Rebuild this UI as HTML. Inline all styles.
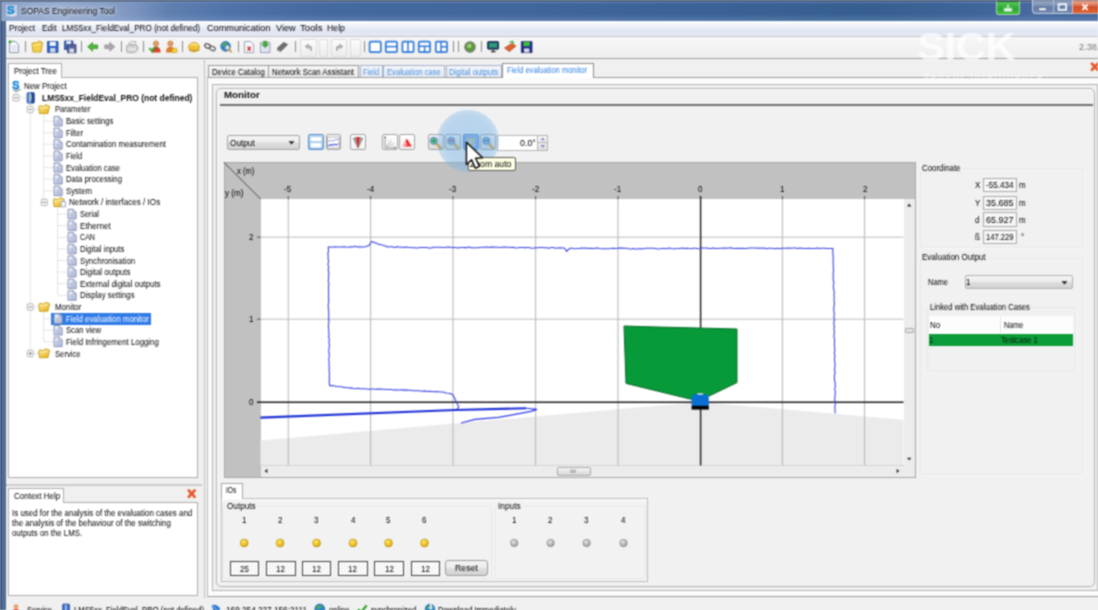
<!DOCTYPE html>
<html><head><meta charset="utf-8"><title>SOPAS Engineering Tool</title>
<style>
html,body{margin:0;padding:0;}
html{overflow:hidden;}
body{width:1098px;height:610px;overflow:hidden;position:relative;background:#f0f0f0;}
#stage{position:absolute;left:-20px;top:-20px;width:1138px;height:650px;padding:0;filter:url(#softblur);background:#f0f0f0;}
#inner{position:absolute;left:20px;top:20px;width:1098px;height:610px;overflow:visible;}
body,#stage{font-family:"Liberation Sans",sans-serif;font-size:9.5px;color:#000;}
.a{position:absolute;box-sizing:border-box;}
.t{position:absolute;white-space:nowrap;line-height:12px;height:12px;transform-origin:0 50%;}
#titlebar{left:0;top:0;width:1098px;height:21px;background:linear-gradient(90deg,#8da2c8 0,#9aadd0 60px,#8099c3 125px,#5f7fb0 170px,#4f72a8 230px,#44699f 330px,#40669b 520px,#3b6296 700px,#365f90 870px,#3d6497 960px,#46699e 1030px,#42669b 1098px);}
#titleshade{left:0;top:0;width:1098px;height:21px;background:linear-gradient(180deg,#2a3a52 0,#2e4059 1px,rgba(150,175,215,.55) 1.7px,rgba(120,150,200,.2) 2.8px,rgba(0,0,0,0) 4px,rgba(0,0,0,0) 14px,rgba(170,195,230,.22) 21px);}
#lborder{left:0;top:21px;width:6.4px;height:589px;background:linear-gradient(90deg,#2a344e 0,#2c3650 1px,#47679a 1.5px,#53739f 5px,#566479 5.6px,#5a677c 6.4px);}
#menubar{left:6px;top:20.8px;width:1092px;height:15.7px;background:linear-gradient(180deg,#fbfcfe 0,#f5f7fc 3px,#e6eaf6 8px,#e0e5f3 11px,#e5e9f4 100%);}
#toolbar{left:6px;top:36px;width:1092px;height:22.8px;background:linear-gradient(180deg,#f6f6f6,#efefef);border-top:1.4px solid #c6c6cc;border-bottom:1px solid #9d9d9d;}
.tab{background:linear-gradient(180deg,#f6f6f6,#e9e9e9);border:1px solid #9a9a9a;border-bottom:none;}
.tabsel{background:#fff;border:1px solid #8e8e8e;border-bottom:none;}
.box{background:#fff;border:1px solid #adadad;}
.grp{border:1px solid #d5d5d5;border-radius:3px;}
.fld{background:#fff;border:1px solid #8a8a8a;}
.btn{border:1px solid #8f8f8f;border-radius:2px;background:linear-gradient(180deg,#f4f4f4 0,#ececec 48%,#dedede 52%,#d2d2d2 100%);}
.sep{width:1px;height:11px;top:41px;background:#8a8a8a;}
</style></head>
<body>
<svg width="0" height="0" style="position:absolute"><defs><filter id="softblur" x="0" y="0" width="100%" height="100%" color-interpolation-filters="sRGB"><feConvolveMatrix order="3" kernelMatrix="1 2 1 2 5 2 1 2 1" divisor="17" edgeMode="duplicate" preserveAlpha="true"/></filter></defs></svg><div id="stage"><div id="inner">
<div class="a" id="titlebar"></div>
<div class="a" id="titleshade"></div>
<div class="a" id="lborder"></div>
<div class="a" id="menubar"></div>
<div class="a" id="toolbar"></div>
<div class="a sep" style="left:25px"></div>
<div class="a sep" style="left:81.4px"></div>
<div class="a sep" style="left:120.8px"></div>
<div class="a sep" style="left:143.4px"></div>
<div class="a sep" style="left:182px"></div>
<div class="a sep" style="left:238px"></div>
<div class="a sep" style="left:294.5px"></div>
<div class="a sep" style="left:363.8px"></div>
<div class="a sep" style="left:453.4px"></div>
<div class="a sep" style="left:458px"></div>
<div class="a sep" style="left:481.3px"></div>
<div class="a" style="left:299.6px;top:38.5px;width:17.7px;height:18px;border:1px solid #dcdcdc;border-radius:2px;background:linear-gradient(180deg,#fcfcfc,#ececec)"></div>
<div class="a" style="left:318.7px;top:38.5px;width:9.6px;height:18px;border:1px solid #dcdcdc;border-radius:2px;background:linear-gradient(180deg,#fcfcfc,#ececec)"></div>
<div class="a" style="left:331px;top:38.5px;width:16.4px;height:18px;border:1px solid #dcdcdc;border-radius:2px;background:linear-gradient(180deg,#fcfcfc,#ececec)"></div>
<div class="a" style="left:350px;top:38.5px;width:10.5px;height:18px;border:1px solid #dcdcdc;border-radius:2px;background:linear-gradient(180deg,#fcfcfc,#ececec)"></div>
<svg class="a" style="left:0;top:36px" width="560" height="22" viewBox="0 36 560 22">
<path d="M9.5 41.5H15.5L18.5 44.5V52.5H9.5Z" fill="#f6f8fc" stroke="#7f8aa8" stroke-width="0.9"/><path d="M11 46h6M11 48h6M11 50h6" stroke="#c4cbdc" stroke-width="0.7"/><circle cx="10" cy="41.8" r="1.6" fill="#3fae3a"/>
<path d="M32 44L33 52H41L42.5 42.5L38.5 41L36.8 43L33 42.5Z" fill="#f4cf4c" stroke="#c79c20" stroke-width="0.9" stroke-linejoin="round"/><path d="M33.5 45.4L41 44.2" stroke="#fff2a8" stroke-width="0.9"/>
<path d="M47.5 41.5H58V52.5H47.5Z" fill="#2d62c4" stroke="#1f469a" stroke-width="0.8"/><rect x="49.6" y="41.8" width="6.2" height="4.2" fill="#eef2fa"/><rect x="50.2" y="48" width="5.2" height="4.4" fill="#cfd6e6"/>
<path d="M64.5 41H73V49.5H64.5Z" fill="#3c64b8" stroke="#28468f" stroke-width="0.8"/><rect x="66.4" y="41.2" width="4.6" height="3.2" fill="#eef2fa"/><path d="M67.5 44.5H76V52.8H67.5Z" fill="#55629c" stroke="#3a4578" stroke-width="0.8"/><rect x="69.4" y="48.6" width="4.6" height="4" fill="#d9dce8"/>
<path d="M87.6 46.8L92.6 42.4V45H97.6V48.6H92.6V51.2Z" fill="#4eb83a" stroke="#2f8a22" stroke-width="0.7"/>
<path d="M114.8 46.8L109.8 42.4V45H104.8V48.6H109.8V51.2Z" fill="#a9a9a9" stroke="#8a8a8a" stroke-width="0.7"/>
<path d="M128.5 43.5L131 41.5H136L134.6 45.4Z" fill="#f2f2f2" stroke="#a0a0a0" stroke-width="0.7"/><path d="M126.6 46.5Q126.6 45 128.6 45H135.6Q137.6 45 137.6 46.8V50L134.6 52.6H128.6Q126.6 52.6 126.6 51Z" fill="#d4d4d4" stroke="#9a9a9a" stroke-width="0.8"/><path d="M128 49.2H136" stroke="#f5f5f5" stroke-width="1"/>
<circle cx="156" cy="43.6" r="2.6" fill="#e2a06a" stroke="#b06a30" stroke-width="0.6"/><path d="M151.6 52.6Q151.6 46.4 156 46.4Q160.6 46.4 160.6 52.6Z" fill="#d8432c"/><path d="M149.4 48.2L152.2 51.4L155.6 46.8" stroke="#2fa02a" stroke-width="1.8" fill="none"/>
<circle cx="170.4" cy="43.6" r="2.6" fill="#e2a06a" stroke="#b06a30" stroke-width="0.6"/><path d="M166 52.6Q166 46.4 170.4 46.4Q175 46.4 175 52.6Z" fill="#e07a2c"/><rect x="172" y="48.4" width="5" height="4.2" rx="0.8" fill="#f2d23a" stroke="#b9971c" stroke-width="0.6"/>
<ellipse cx="194" cy="47.2" rx="5.4" ry="4.6" fill="#f1c232" stroke="#c4952a" stroke-width="0.8"/><path d="M190.4 45.2Q194 43 197.6 45.4" stroke="#fff0b0" stroke-width="1.2" fill="none"/><path d="M189 50.4H199.4" stroke="#c4952a" stroke-width="1.2"/>
<ellipse cx="207.6" cy="46" rx="3" ry="2" fill="none" stroke="#555" stroke-width="1.3" transform="rotate(25 207.6 46)"/><ellipse cx="212.4" cy="48.4" rx="3" ry="2" fill="none" stroke="#666" stroke-width="1.3" transform="rotate(25 212.4 48.4)"/>
<circle cx="225.6" cy="46.4" r="4.8" fill="#2f86c8" stroke="#1f5f96" stroke-width="0.7"/><path d="M222 44.4Q224.4 41.8 227.6 43.2Q226 45.6 223.6 46.4Z" fill="#4fb04a"/><circle cx="227.4" cy="47.6" r="2.3" fill="#d9ecf8" stroke="#7a7a7a" stroke-width="0.7"/><path d="M229 49.4L231.6 52.2" stroke="#c98a2a" stroke-width="1.6"/>
<path d="M244.5 41.5H250.6L253.6 44.4V52.6H244.5Z" fill="#f7f8fc" stroke="#8a92ae" stroke-width="0.8"/><path d="M247.6 46.6L250.6 50.6M250.6 46.6L247.6 50.6" stroke="#d9281c" stroke-width="1.4"/>
<path d="M260.4 42.4H270V52.6H260.4Z" fill="#dfe4ee" stroke="#8a92ae" stroke-width="0.8"/><path d="M263.4 41.2H267V44.6H268.6L265.2 47.6L261.8 44.6H263.4Z" fill="#3fae3a" stroke="#2a8226" stroke-width="0.5"/>
<path d="M277 48.6L283.6 42.6L287.6 44.6L281 51Z" fill="#6f6f6f" stroke="#4a4a4a" stroke-width="0.7"/><path d="M277 48.6L281 51L280.6 52.6L276.8 50.2Z" fill="#9a9a9a"/>
<path d="M311.6 51Q313.4 45.4 308.4 45.2V43.2L304.8 46.4L308.4 49.4V47.6Q310.6 47.6 310 51Z" fill="#a9a9a9"/>
<path d="M336.4 51Q334.6 45.4 339.6 45.2V43.2L343.2 46.4L339.6 49.4V47.6Q337.4 47.6 338 51Z" fill="#a9a9a9"/>
<rect x="369.6" y="41.6" width="11.2" height="10.6" rx="1.2" fill="#fff" stroke="#2f7ad8" stroke-width="1.7"/><path d="" stroke="#2f7ad8" stroke-width="1.5" fill="none"/>
<rect x="385.8" y="41.6" width="11.2" height="10.6" rx="1.2" fill="#fff" stroke="#2f7ad8" stroke-width="1.7"/><path d="M385.8 46.6H397" stroke="#2f7ad8" stroke-width="1.5" fill="none"/>
<rect x="402.4" y="41.6" width="11.2" height="10.6" rx="1.2" fill="#fff" stroke="#2f7ad8" stroke-width="1.7"/><path d="M408 41.6V52.2" stroke="#2f7ad8" stroke-width="1.5" fill="none"/>
<rect x="418.8" y="41.6" width="11.2" height="10.6" rx="1.2" fill="#fff" stroke="#2f7ad8" stroke-width="1.7"/><path d="M418.8 46.2H430M424.6 46.2V52.2" stroke="#2f7ad8" stroke-width="1.5" fill="none"/>
<rect x="435.8" y="41.6" width="11.2" height="10.6" rx="1.2" fill="#fff" stroke="#2f7ad8" stroke-width="1.7"/><path d="M441 41.6V52.2M441 46.8H447" stroke="#2f7ad8" stroke-width="1.5" fill="none"/>
<circle cx="470" cy="47" r="5.2" fill="#5a9a3a" stroke="#7a7a7a" stroke-width="1.2"/><circle cx="469.4" cy="46" r="2.2" fill="#9fd07a"/>
<rect x="487.6" y="41.6" width="11" height="7.6" rx="0.8" fill="#1f3f6a" stroke="#10223f" stroke-width="0.8"/><rect x="489" y="43" width="8.2" height="4.6" fill="#2f9a7a"/><path d="M491 51.6H495.6M493.2 49.4V51.6" stroke="#333" stroke-width="1.3"/>
<path d="M504.6 48L511.6 43.6L516 46L509.4 51.6Z" fill="#e0622c" stroke="#a8431c" stroke-width="0.7"/><path d="M509.6 42.4L512.6 41.4L513.6 44" stroke="#3fae3a" stroke-width="1.4" fill="none"/>
<path d="M521.4 41.6H532V52.6H521.4Z" fill="#1e2a8c" stroke="#141c5f" stroke-width="0.7"/><rect x="523.4" y="41.8" width="6.4" height="4.4" fill="#3fbf3a"/><rect x="524" y="48.4" width="5.4" height="4" fill="#d9dce8"/>
</svg>
<div class="a" style="left:996px;top:1px;width:23.5px;height:13.5px;border:1px solid #a9d7b0;border-top:none;border-radius:0 0 3px 3px;background:linear-gradient(180deg,#2c4a3a 0,#4fc254 1.5px,#34b03a 50%,#2aa632 55%,#3fbd42)"></div>
<svg class="a" style="left:1003px;top:3px" width="10" height="10"><rect x="1" y="5" width="8" height="3.6" fill="#e6f4e4" stroke="#8cc78c" stroke-width="0.6"/><path d="M5 1.4V5" stroke="#e6f4e4" stroke-width="1.4"/></svg>
<div class="a" style="left:1031.5px;top:0;width:67px;height:14px;border:1px solid #c3cee0;border-top:none;border-radius:0 0 4px 4px;background:linear-gradient(180deg,#2e3f5a 0,#93a6c6 1.5px,#7a90b4 45%,#647da6 52%,#7189b2)"></div>
<div class="a" style="left:1052.5px;top:0;width:1px;height:13.5px;background:#aebbd2"></div>
<div class="a" style="left:1072px;top:0;width:26px;height:13.5px;border-left:1px solid #e0c0b8;border-bottom:1px solid #d8b0a8;background:linear-gradient(180deg,#4a3238 0,#e8a590 1.5px,#dd6c4a 45%,#d24c26 52%,#dc6636)"></div>
<svg class="a" style="left:1032px;top:0" width="66" height="14"><rect x="7" y="8" width="7" height="2.4" fill="#fff" stroke="#5a6a88" stroke-width="0.4"/><rect x="26.6" y="4.2" width="7.6" height="5.6" fill="none" stroke="#fff" stroke-width="1.6"/><path d="M50.4 4.4L55.6 9.8M55.6 4.4L50.4 9.8" stroke="#fff" stroke-width="1.8"/></svg>
<svg class="a" style="left:1090px;top:62px" width="8" height="10"><path d="M2 1.8L7.8 7.8M7.8 1.8L2 7.8" stroke="#e5592b" stroke-width="2.7" stroke-linecap="round"/></svg>
<div class="a" style="left:0;top:0;width:1.3px;height:21px;background:#232f4a"></div>
<svg class="a" style="left:5px;top:3px" width="14" height="15" viewBox="5 3 14 15"><rect x="6" y="5" width="11" height="11.4" fill="rgba(235,240,250,.55)"/><path d="M8 15.6L12.6 16.6L17 13.8L13 12.6Z" fill="#e4e8ee"/><text x="7" y="14.4" font-family="Liberation Sans,sans-serif" font-weight="bold" font-size="11.5" fill="#1d8ad6" stroke="#1d8ad6" stroke-width="0.5">S</text></svg>
<div class="a tabsel" style="left:8px;top:63px;width:54px;height:15px;border-color:#adadad"></div>
<div class="a box" style="left:8px;top:77px;width:190px;height:401px;"></div>
<div class="a" style="left:9px;top:77px;width:52px;height:1px;background:#fff"></div>
<div class="a" style="left:6px;top:483.8px;width:196px;height:1.8px;background:#cbcbcb"></div>
<div class="a" style="left:204px;top:58px;width:1.2px;height:540px;background:#c2c2c2"></div>
<div class="a tabsel" style="left:8px;top:488px;width:56px;height:15px;border-color:#adadad"></div>
<div class="a box" style="left:8px;top:502px;width:190px;height:94px;"></div>
<div class="a" style="left:9px;top:502px;width:54px;height:1px;background:#fff"></div>
<div class="a" style="left:51px;top:313px;width:100px;height:12px;background:#2f7be8"></div>
<svg class="a" style="left:0;top:0" width="210" height="610" viewBox="0 0 210 610">
<defs><linearGradient id="gdoc" x1="0" y1="0" x2="1" y2="1"><stop offset="0" stop-color="#f4f6fb"/><stop offset="1" stop-color="#b9c4e0"/></linearGradient>
<linearGradient id="gfol" x1="0" y1="0" x2="0.6" y2="1"><stop offset="0" stop-color="#fff0a0"/><stop offset="1" stop-color="#e9b92a"/></linearGradient>
<linearGradient id="gdev" x1="0" y1="0" x2="1" y2="0"><stop offset="0" stop-color="#3f6fc8"/><stop offset="0.45" stop-color="#8fb6ee"/><stop offset="0.6" stop-color="#2a50a8"/><stop offset="1" stop-color="#1c3a88"/></linearGradient></defs>
<path d="M16 92V97.8M19 97.8H26" stroke="#c6c6c6" stroke-width="0.9" stroke-dasharray="1 1" fill="none"/>
<path d="M30.3 104V353.5M33 109.4H38M33 307.0H38M33 353.5H38" stroke="#c6c6c6" stroke-width="0.9" stroke-dasharray="1 1" fill="none"/>
<path d="M43.6 114.4V202.4" stroke="#c6c6c6" stroke-width="0.9" stroke-dasharray="1 1" fill="none"/>
<path d="M44 121.1H53" stroke="#c6c6c6" stroke-width="0.9" stroke-dasharray="1 1" fill="none"/>
<path d="M44 132.7H53" stroke="#c6c6c6" stroke-width="0.9" stroke-dasharray="1 1" fill="none"/>
<path d="M44 144.3H53" stroke="#c6c6c6" stroke-width="0.9" stroke-dasharray="1 1" fill="none"/>
<path d="M44 155.9H53" stroke="#c6c6c6" stroke-width="0.9" stroke-dasharray="1 1" fill="none"/>
<path d="M44 167.5H53" stroke="#c6c6c6" stroke-width="0.9" stroke-dasharray="1 1" fill="none"/>
<path d="M44 179.2H53" stroke="#c6c6c6" stroke-width="0.9" stroke-dasharray="1 1" fill="none"/>
<path d="M44 190.8H53" stroke="#c6c6c6" stroke-width="0.9" stroke-dasharray="1 1" fill="none"/>
<path d="M57.5 207.4V295.4" stroke="#c6c6c6" stroke-width="0.9" stroke-dasharray="1 1" fill="none"/>
<path d="M58 214.0H67" stroke="#c6c6c6" stroke-width="0.9" stroke-dasharray="1 1" fill="none"/>
<path d="M58 225.6H67" stroke="#c6c6c6" stroke-width="0.9" stroke-dasharray="1 1" fill="none"/>
<path d="M58 237.3H67" stroke="#c6c6c6" stroke-width="0.9" stroke-dasharray="1 1" fill="none"/>
<path d="M58 248.9H67" stroke="#c6c6c6" stroke-width="0.9" stroke-dasharray="1 1" fill="none"/>
<path d="M58 260.5H67" stroke="#c6c6c6" stroke-width="0.9" stroke-dasharray="1 1" fill="none"/>
<path d="M58 272.1H67" stroke="#c6c6c6" stroke-width="0.9" stroke-dasharray="1 1" fill="none"/>
<path d="M58 283.7H67" stroke="#c6c6c6" stroke-width="0.9" stroke-dasharray="1 1" fill="none"/>
<path d="M58 295.4H67" stroke="#c6c6c6" stroke-width="0.9" stroke-dasharray="1 1" fill="none"/>
<path d="M43.6 312.0V341.8" stroke="#c6c6c6" stroke-width="0.9" stroke-dasharray="1 1" fill="none"/>
<path d="M44 318.6H53" stroke="#c6c6c6" stroke-width="0.9" stroke-dasharray="1 1" fill="none"/>
<path d="M44 330.2H53" stroke="#c6c6c6" stroke-width="0.9" stroke-dasharray="1 1" fill="none"/>
<path d="M44 341.8H53" stroke="#c6c6c6" stroke-width="0.9" stroke-dasharray="1 1" fill="none"/>
<path d="M12 90.2L16.5 92.6L22 89.4L17 88Z" fill="#b4bac6"/>
<text x="12.2" y="89.4" font-family="Liberation Sans,sans-serif" font-weight="bold" font-size="10.8" fill="#1d8ad6" stroke="#1d8ad6" stroke-width="0.6">S</text>
<rect x="27" y="92.6" width="7.4" height="10.6" rx="1.2" fill="url(#gdev)" stroke="#1c3a88" stroke-width="0.6"/><rect x="30" y="94.4" width="1.3" height="6" fill="#c8f2a0"/>
<g><rect x="13.0" y="94.6" width="6" height="6.4" rx="1" fill="#fbfbfb" stroke="#a9a9a9" stroke-width="0.9"/><path d="M14.4 97.8H17.6" stroke="#777" stroke-width="0.9"/></g>
<g><rect x="27.2" y="106.2" width="6" height="6.4" rx="1" fill="#fbfbfb" stroke="#a9a9a9" stroke-width="0.9"/><path d="M28.6 109.4H31.8" stroke="#777" stroke-width="0.9"/></g>
<g transform="translate(38.2,104.0)"><path d="M0.6 3.2L1.2 9.6H9.6L11.4 2.2L7.2 0.6L5.6 2.4L1.2 1.8Z" fill="url(#gfol)" stroke="#c49a1c" stroke-width="0.9" stroke-linejoin="round"/><path d="M2.2 4.2L9.8 3.2" stroke="#fff3b0" stroke-width="0.9"/></g>
<g transform="translate(53.6,115.9)"><path d="M0.5 0.5H5.6L8.5 3.2V10H0.5Z" fill="url(#gdoc)" stroke="#7a86ad" stroke-width="0.9"/><path d="M5.6 0.5V3.2H8.5" fill="#eef1f8" stroke="#7a86ad" stroke-width="0.7"/><path d="M2.2 5H6.8M2.2 6.6H6.8M2.2 8.2H6.8" stroke="#9aa6c8" stroke-width="0.7"/></g>
<g transform="translate(53.6,127.5)"><path d="M0.5 0.5H5.6L8.5 3.2V10H0.5Z" fill="url(#gdoc)" stroke="#7a86ad" stroke-width="0.9"/><path d="M5.6 0.5V3.2H8.5" fill="#eef1f8" stroke="#7a86ad" stroke-width="0.7"/><path d="M2.2 5H6.8M2.2 6.6H6.8M2.2 8.2H6.8" stroke="#9aa6c8" stroke-width="0.7"/></g>
<g transform="translate(53.6,139.1)"><path d="M0.5 0.5H5.6L8.5 3.2V10H0.5Z" fill="url(#gdoc)" stroke="#7a86ad" stroke-width="0.9"/><path d="M5.6 0.5V3.2H8.5" fill="#eef1f8" stroke="#7a86ad" stroke-width="0.7"/><path d="M2.2 5H6.8M2.2 6.6H6.8M2.2 8.2H6.8" stroke="#9aa6c8" stroke-width="0.7"/></g>
<g transform="translate(53.6,150.7)"><path d="M0.5 0.5H5.6L8.5 3.2V10H0.5Z" fill="url(#gdoc)" stroke="#7a86ad" stroke-width="0.9"/><path d="M5.6 0.5V3.2H8.5" fill="#eef1f8" stroke="#7a86ad" stroke-width="0.7"/><path d="M2.2 5H6.8M2.2 6.6H6.8M2.2 8.2H6.8" stroke="#9aa6c8" stroke-width="0.7"/></g>
<g transform="translate(53.6,162.3)"><path d="M0.5 0.5H5.6L8.5 3.2V10H0.5Z" fill="url(#gdoc)" stroke="#7a86ad" stroke-width="0.9"/><path d="M5.6 0.5V3.2H8.5" fill="#eef1f8" stroke="#7a86ad" stroke-width="0.7"/><path d="M2.2 5H6.8M2.2 6.6H6.8M2.2 8.2H6.8" stroke="#9aa6c8" stroke-width="0.7"/></g>
<g transform="translate(53.6,174.0)"><path d="M0.5 0.5H5.6L8.5 3.2V10H0.5Z" fill="url(#gdoc)" stroke="#7a86ad" stroke-width="0.9"/><path d="M5.6 0.5V3.2H8.5" fill="#eef1f8" stroke="#7a86ad" stroke-width="0.7"/><path d="M2.2 5H6.8M2.2 6.6H6.8M2.2 8.2H6.8" stroke="#9aa6c8" stroke-width="0.7"/></g>
<g transform="translate(53.6,185.6)"><path d="M0.5 0.5H5.6L8.5 3.2V10H0.5Z" fill="url(#gdoc)" stroke="#7a86ad" stroke-width="0.9"/><path d="M5.6 0.5V3.2H8.5" fill="#eef1f8" stroke="#7a86ad" stroke-width="0.7"/><path d="M2.2 5H6.8M2.2 6.6H6.8M2.2 8.2H6.8" stroke="#9aa6c8" stroke-width="0.7"/></g>
<g><rect x="41.3" y="199.2" width="6" height="6.4" rx="1" fill="#fbfbfb" stroke="#a9a9a9" stroke-width="0.9"/><path d="M42.7 202.4H45.9" stroke="#777" stroke-width="0.9"/></g>
<g transform="translate(52.8,197.0)"><path d="M0.6 3.2L1.2 9.6H9.6L11.4 2.2L7.2 0.6L5.6 2.4L1.2 1.8Z" fill="url(#gfol)" stroke="#c49a1c" stroke-width="0.9" stroke-linejoin="round"/><path d="M2.2 4.2L9.8 3.2" stroke="#fff3b0" stroke-width="0.9"/></g>
<path d="M61 201.4h4.5v5.5h-4.5z" fill="#f4f6fb" stroke="#8a96bd" stroke-width="0.7"/>
<g transform="translate(67.6,208.8)"><path d="M0.5 0.5H5.6L8.5 3.2V10H0.5Z" fill="url(#gdoc)" stroke="#7a86ad" stroke-width="0.9"/><path d="M5.6 0.5V3.2H8.5" fill="#eef1f8" stroke="#7a86ad" stroke-width="0.7"/><path d="M2.2 5H6.8M2.2 6.6H6.8M2.2 8.2H6.8" stroke="#9aa6c8" stroke-width="0.7"/></g>
<g transform="translate(67.6,220.4)"><path d="M0.5 0.5H5.6L8.5 3.2V10H0.5Z" fill="url(#gdoc)" stroke="#7a86ad" stroke-width="0.9"/><path d="M5.6 0.5V3.2H8.5" fill="#eef1f8" stroke="#7a86ad" stroke-width="0.7"/><path d="M2.2 5H6.8M2.2 6.6H6.8M2.2 8.2H6.8" stroke="#9aa6c8" stroke-width="0.7"/></g>
<g transform="translate(67.6,232.1)"><path d="M0.5 0.5H5.6L8.5 3.2V10H0.5Z" fill="url(#gdoc)" stroke="#7a86ad" stroke-width="0.9"/><path d="M5.6 0.5V3.2H8.5" fill="#eef1f8" stroke="#7a86ad" stroke-width="0.7"/><path d="M2.2 5H6.8M2.2 6.6H6.8M2.2 8.2H6.8" stroke="#9aa6c8" stroke-width="0.7"/></g>
<g transform="translate(67.6,243.7)"><path d="M0.5 0.5H5.6L8.5 3.2V10H0.5Z" fill="url(#gdoc)" stroke="#7a86ad" stroke-width="0.9"/><path d="M5.6 0.5V3.2H8.5" fill="#eef1f8" stroke="#7a86ad" stroke-width="0.7"/><path d="M2.2 5H6.8M2.2 6.6H6.8M2.2 8.2H6.8" stroke="#9aa6c8" stroke-width="0.7"/></g>
<g transform="translate(67.6,255.3)"><path d="M0.5 0.5H5.6L8.5 3.2V10H0.5Z" fill="url(#gdoc)" stroke="#7a86ad" stroke-width="0.9"/><path d="M5.6 0.5V3.2H8.5" fill="#eef1f8" stroke="#7a86ad" stroke-width="0.7"/><path d="M2.2 5H6.8M2.2 6.6H6.8M2.2 8.2H6.8" stroke="#9aa6c8" stroke-width="0.7"/></g>
<g transform="translate(67.6,266.9)"><path d="M0.5 0.5H5.6L8.5 3.2V10H0.5Z" fill="url(#gdoc)" stroke="#7a86ad" stroke-width="0.9"/><path d="M5.6 0.5V3.2H8.5" fill="#eef1f8" stroke="#7a86ad" stroke-width="0.7"/><path d="M2.2 5H6.8M2.2 6.6H6.8M2.2 8.2H6.8" stroke="#9aa6c8" stroke-width="0.7"/></g>
<g transform="translate(67.6,278.5)"><path d="M0.5 0.5H5.6L8.5 3.2V10H0.5Z" fill="url(#gdoc)" stroke="#7a86ad" stroke-width="0.9"/><path d="M5.6 0.5V3.2H8.5" fill="#eef1f8" stroke="#7a86ad" stroke-width="0.7"/><path d="M2.2 5H6.8M2.2 6.6H6.8M2.2 8.2H6.8" stroke="#9aa6c8" stroke-width="0.7"/></g>
<g transform="translate(67.6,290.2)"><path d="M0.5 0.5H5.6L8.5 3.2V10H0.5Z" fill="url(#gdoc)" stroke="#7a86ad" stroke-width="0.9"/><path d="M5.6 0.5V3.2H8.5" fill="#eef1f8" stroke="#7a86ad" stroke-width="0.7"/><path d="M2.2 5H6.8M2.2 6.6H6.8M2.2 8.2H6.8" stroke="#9aa6c8" stroke-width="0.7"/></g>
<g><rect x="27.2" y="303.8" width="6" height="6.4" rx="1" fill="#fbfbfb" stroke="#a9a9a9" stroke-width="0.9"/><path d="M28.6 307.0H31.8" stroke="#777" stroke-width="0.9"/></g>
<g transform="translate(38.2,301.6)"><path d="M0.6 3.2L1.2 9.6H9.6L11.4 2.2L7.2 0.6L5.6 2.4L1.2 1.8Z" fill="url(#gfol)" stroke="#c49a1c" stroke-width="0.9" stroke-linejoin="round"/><path d="M2.2 4.2L9.8 3.2" stroke="#fff3b0" stroke-width="0.9"/></g>
<g transform="translate(53.6,313.4)"><path d="M0.5 0.5H5.6L8.5 3.2V10H0.5Z" fill="url(#gdoc)" stroke="#7a86ad" stroke-width="0.9"/><path d="M5.6 0.5V3.2H8.5" fill="#eef1f8" stroke="#7a86ad" stroke-width="0.7"/><path d="M2.2 5H6.8M2.2 6.6H6.8M2.2 8.2H6.8" stroke="#9aa6c8" stroke-width="0.7"/></g>
<g transform="translate(53.6,325.0)"><path d="M0.5 0.5H5.6L8.5 3.2V10H0.5Z" fill="url(#gdoc)" stroke="#7a86ad" stroke-width="0.9"/><path d="M5.6 0.5V3.2H8.5" fill="#eef1f8" stroke="#7a86ad" stroke-width="0.7"/><path d="M2.2 5H6.8M2.2 6.6H6.8M2.2 8.2H6.8" stroke="#9aa6c8" stroke-width="0.7"/></g>
<g transform="translate(53.6,336.6)"><path d="M0.5 0.5H5.6L8.5 3.2V10H0.5Z" fill="url(#gdoc)" stroke="#7a86ad" stroke-width="0.9"/><path d="M5.6 0.5V3.2H8.5" fill="#eef1f8" stroke="#7a86ad" stroke-width="0.7"/><path d="M2.2 5H6.8M2.2 6.6H6.8M2.2 8.2H6.8" stroke="#9aa6c8" stroke-width="0.7"/></g>
<g><rect x="27.2" y="350.3" width="6" height="6.4" rx="1" fill="#fbfbfb" stroke="#a9a9a9" stroke-width="0.9"/><path d="M28.6 353.5H31.8" stroke="#777" stroke-width="0.9"/><path d="M30.2 351.9V355.1" stroke="#777" stroke-width="0.9"/></g>
<g transform="translate(38.2,348.1)"><path d="M0.6 3.2L1.2 9.6H9.6L11.4 2.2L7.2 0.6L5.6 2.4L1.2 1.8Z" fill="url(#gfol)" stroke="#c49a1c" stroke-width="0.9" stroke-linejoin="round"/><path d="M2.2 4.2L9.8 3.2" stroke="#fff3b0" stroke-width="0.9"/></g>
<path d="M188.8 490.5L194.6 496.8M194.6 490.5L188.8 496.8" stroke="#e5592b" stroke-width="2.7" stroke-linecap="round"/>
</svg>
<div class="a" style="left:207px;top:77.3px;width:895px;height:519.4px;border:1px solid #9c9c9c;border-left-color:#bcbcbc;background:#fbfbfb"></div>
<div class="a" style="left:211.5px;top:84.2px;width:886px;height:506.5px;border:1px solid #b4b4b4;background:#f0f0f0"></div>
<div class="a tab" style="left:208.3px;top:64.8px;width:60.69999999999999px;height:12.6px;"></div>
<div class="a tab" style="left:268px;top:64.8px;width:91.19999999999999px;height:12.6px;"></div>
<div class="a tab" style="left:359.5px;top:64.8px;width:23.5px;height:12.6px;border-color:#a7b2c6;background:linear-gradient(180deg,#f4f6fa,#e6eaf2)"></div>
<div class="a tab" style="left:383px;top:64.8px;width:61.5px;height:12.6px;border-color:#a7b2c6;background:linear-gradient(180deg,#f4f6fa,#e6eaf2)"></div>
<div class="a tab" style="left:446px;top:64.8px;width:56px;height:12.6px;border-color:#a7b2c6;background:linear-gradient(180deg,#f4f6fa,#e6eaf2)"></div>
<div class="a tabsel" style="left:502px;top:63px;width:92px;height:15.4px;"></div>
<div class="a" style="left:215.6px;top:87.8px;width:879px;height:499.6px;border:1px solid #b2b2b2;border-radius:5px;background:#f1f1f1;box-shadow:inset 1px 1px 0 #fcfcfc"></div>
<div class="a" style="left:219.5px;top:104px;width:873px;height:1.5px;background:#6f6f6f"></div>
<div class="a btn" style="left:227px;top:135px;width:73px;height:15px;border-color:#a5a5a5"></div>
<svg class="a" style="left:288px;top:140px" width="8" height="6"><path d="M0.5 1.2H6.5L3.5 4.6Z" fill="#222"/></svg>
<div class="a" style="left:308px;top:134px;width:16.0px;height:16px;border:1px solid #a3a3a3;border-radius:2px;background:linear-gradient(180deg,#fff,#f3f3f3);border-color:#5a8cc2;background:linear-gradient(180deg,#b9d7f3,#8fbbe6);"></div>
<div class="a" style="left:325.7px;top:134px;width:15.5px;height:16px;border:1px solid #a3a3a3;border-radius:2px;background:linear-gradient(180deg,#fff,#f3f3f3);"></div>
<div class="a" style="left:350px;top:134px;width:16.0px;height:16px;border:1px solid #a3a3a3;border-radius:2px;background:linear-gradient(180deg,#fff,#f3f3f3);"></div>
<div class="a" style="left:382px;top:134px;width:16.0px;height:16px;border:1px solid #a3a3a3;border-radius:2px;background:linear-gradient(180deg,#fff,#f3f3f3);"></div>
<div class="a" style="left:399.4px;top:134px;width:16.0px;height:16px;border:1px solid #a3a3a3;border-radius:2px;background:linear-gradient(180deg,#fff,#f3f3f3);"></div>
<div class="a" style="left:427.7px;top:134px;width:16.0px;height:16px;border:1px solid #a3a3a3;border-radius:2px;background:linear-gradient(180deg,#fff,#f3f3f3);background:linear-gradient(180deg,#f4f4f4,#dcdcdc);"></div>
<div class="a" style="left:445.2px;top:134px;width:16.0px;height:16px;border:1px solid #a3a3a3;border-radius:2px;background:linear-gradient(180deg,#fff,#f3f3f3);background:linear-gradient(180deg,#f4f4f4,#dcdcdc);"></div>
<div class="a" style="left:462.6px;top:134px;width:16.0px;height:16px;border:1px solid #a3a3a3;border-radius:2px;background:linear-gradient(180deg,#fff,#f3f3f3);background:linear-gradient(180deg,#f4f4f4,#dcdcdc);border-color:#3d74c4;background:#9fc4ee;"></div>
<div class="a" style="left:480px;top:134px;width:16.0px;height:16px;border:1px solid #a3a3a3;border-radius:2px;background:linear-gradient(180deg,#fff,#f3f3f3);background:linear-gradient(180deg,#f4f4f4,#dcdcdc);"></div>
<div class="a fld" style="left:496.5px;top:134.5px;width:41px;height:16px;border-color:#b5b5b5"></div>
<div class="a" style="left:537.3px;top:134.5px;width:11px;height:16px;border:1px solid #b5b5b5;background:linear-gradient(180deg,#f6f6f6,#dedede)"></div>
<div class="a" style="left:538px;top:142.2px;width:10px;height:1px;background:#b5b5b5"></div>
<svg class="a" style="left:300px;top:129.5px" width="260" height="26" viewBox="300 130 260 26">
<rect x="310.6" y="137.2" width="10.8" height="4" fill="#fff"/><rect x="310.6" y="143" width="10.8" height="4.6" fill="#fff"/>
<rect x="327.6" y="137" width="11.6" height="11" fill="#fff" stroke="#9a9a9a" stroke-width="0.8"/>
<path d="M328.4 141.2L330.6 140.4L332.6 141L335 139.8L338.6 139.4" stroke="#6d7de0" stroke-width="0.8" fill="none"/>
<path d="M328.4 145.8L330.4 144.6L332 145.6L334 144.2L336 145L338.6 143.6" stroke="#2d3bd8" stroke-width="1.3" fill="none" stroke-dasharray="1.6 0.6"/>
<path d="M352.6 138.2Q358 135.4 363.4 138.2L358.4 148.2H357.6Z" fill="#9a9a9a"/><path d="M356.4 137.2H359.6L358.3 147.6H357.7Z" fill="#e8201c"/>
<path d="M385 137V147.8H395.4" stroke="#8d8d8d" stroke-width="0.9" fill="none"/><path d="M385.4 147.4L392 139.6M385.4 147.4L394 143.4M387 140h1M390 142.6h1M388 145h1M392 145.6h1" stroke="#b0b0b0" stroke-width="0.7"/>
<path d="M384.2 138L385 136.4L385.8 138M394.6 147L396 147.8L394.6 148.6" fill="#555" stroke="#555" stroke-width="0.5"/>
<path d="M406.8 138.4L411.8 146.6H403.6Z" fill="#ef2a2a"/><path d="M405.6 139L402 146.6H406Z" fill="#f7a9a9"/><path d="M404.6 141.6L407 145" stroke="#fff" stroke-width="0.8"/>
<g id="mag1"><path d="M436.4 143.6L441 148.4" stroke="#d9a13a" stroke-width="2.3" stroke-linecap="round"/><circle cx="433.8" cy="140.8" r="3.6" fill="#7fb8de" stroke="#5b7f9c" stroke-width="0.9"/></g>
<path d="M431.4 140.8H436.2M433.8 138.4V143.2" stroke="#26a83a" stroke-width="1.5"/>
<g><path d="M453.8 143.6L458.4 148.4" stroke="#d9a13a" stroke-width="2.3" stroke-linecap="round"/><circle cx="451.2" cy="140.8" r="3.6" fill="#7fb8de" stroke="#5b7f9c" stroke-width="0.9"/></g>
<path d="M449 140.6H453.4" stroke="#d83030" stroke-width="1.5"/>
<rect x="465" y="137" width="11.2" height="11" fill="none" stroke="#2f62b8" stroke-width="1" stroke-dasharray="2 1.2"/><circle cx="470.6" cy="141.6" r="3" fill="#a9d0f0" stroke="#d9b13a" stroke-width="1.2"/>
<g><path d="M488.8 143.6L493.2 148.4" stroke="#d9a13a" stroke-width="2.3" stroke-linecap="round"/><circle cx="486.2" cy="140.8" r="3.6" fill="#7fb8de" stroke="#5b7f9c" stroke-width="0.9"/></g>
<path d="M484.4 142.4V139.2L486.2 141L488 139.2V142.4" stroke="#3d5f9c" stroke-width="0.9" fill="none"/>
<path d="M540.6 140.2L542.8 137.4L545 140.2Z" fill="#7a86c8"/><path d="M540.6 145L542.8 147.8L545 145Z" fill="#7a86c8"/>
</svg>
<div class="a" style="left:223.5px;top:161.8px;width:692.5px;height:316.4px;background:#c1c1c1;border:1px solid #a8a8a8"></div>
<div class="a" style="left:260.5px;top:198.8px;width:643px;height:266.7px;background:#fff"></div>
<div class="a" style="left:260.5px;top:465.5px;width:643px;height:11.7px;background:#ececec"></div>
<div class="a" style="left:903.5px;top:198.8px;width:11.5px;height:278.4px;background:#ececec"></div>
<div class="a" style="left:557px;top:466.5px;width:34px;height:9.5px;border:1px solid #a9a9a9;border-radius:2px;background:linear-gradient(180deg,#f5f5f5,#d6d6d6)"></div>
<div class="a" style="left:904.5px;top:327.5px;width:9.5px;height:5px;border:1px solid #a9a9a9;border-radius:1px;background:#e4e4e4"></div>
<svg class="a" style="left:220px;top:160px" width="700" height="320" viewBox="220 160 700 320">
<path d="M224 162.4L260.6 199" stroke="#3a3a3a" stroke-width="0.9"/>
<path d="M260.5 440.5L700.5 402L903.5 419.8V465.5H260.5Z" fill="#ebebeb"/>
<path d="M288.3 198.8V465.5" stroke="#b4b4b4" stroke-width="1"/><path d="M288.3 196V199.2" stroke="#444" stroke-width="0.9"/>
<path d="M370.6 198.8V465.5" stroke="#b4b4b4" stroke-width="1"/><path d="M370.6 196V199.2" stroke="#444" stroke-width="0.9"/>
<path d="M453 198.8V465.5" stroke="#b4b4b4" stroke-width="1"/><path d="M453 196V199.2" stroke="#444" stroke-width="0.9"/>
<path d="M535.6 198.8V465.5" stroke="#b4b4b4" stroke-width="1"/><path d="M535.6 196V199.2" stroke="#444" stroke-width="0.9"/>
<path d="M618 198.8V465.5" stroke="#b4b4b4" stroke-width="1"/><path d="M618 196V199.2" stroke="#444" stroke-width="0.9"/>
<path d="M782.4 198.8V465.5" stroke="#b4b4b4" stroke-width="1"/><path d="M782.4 196V199.2" stroke="#444" stroke-width="0.9"/>
<path d="M864.6 198.8V465.5" stroke="#b4b4b4" stroke-width="1"/><path d="M864.6 196V199.2" stroke="#444" stroke-width="0.9"/>
<path d="M260.5 237.2H903.5" stroke="#bcbcbc" stroke-width="1"/><path d="M257 237.2H260.6" stroke="#444" stroke-width="0.9"/>
<path d="M260.5 319.2H903.5" stroke="#bcbcbc" stroke-width="1"/><path d="M257 319.2H260.6" stroke="#444" stroke-width="0.9"/>
<path d="M257 402.2H903.5" stroke="#1a1a1a" stroke-width="1.4"/>
<path d="M700.6 196V465.5" stroke="#1a1a1a" stroke-width="1.4"/>
<path d="M624 326L641 326.6L737 329V382.6L707 397L700.5 400.5L692.4 399.6L626 383.4Z" fill="#069a38" stroke="#0b6a2c" stroke-width="1"/>
<path d="M329.6 385.6L329.4 383.4L329.2 381.2L329.6 378.9L329.1 376.7L329.5 374.5L329.3 372.3L329.0 370.0L329.4 367.8L328.9 365.6L329.2 363.4L328.9 361.1L328.8 358.9L329.1 356.7L329.4 354.5L328.8 352.2L328.8 350.0L329.2 347.8L329.4 345.6L329.1 343.3L328.9 341.1L329.4 338.9L328.5 336.7L329.2 334.4L328.6 332.2L328.8 330.0L328.5 327.8L328.4 325.6L328.6 323.3L329.0 321.1L328.5 318.9L328.8 316.7L328.8 314.4L328.6 312.2L328.7 310.0L328.3 307.8L328.3 305.6L328.4 303.3L328.8 301.1L328.6 298.9L328.5 296.7L328.7 294.4L328.6 292.2L328.6 290.0L328.4 287.7L328.8 285.5L328.7 283.2L328.3 280.9L328.6 278.7L328.5 276.4L328.8 274.2L328.6 271.9L328.2 269.6L328.8 267.4L328.0 265.1L328.3 262.8L328.6 260.6L328.0 258.3L328.3 256.1L327.8 253.8L328.4 251.5L328.5 249.3L328.2 247.0L330.4 247.0L332.7 247.3L334.9 246.8L337.1 247.1L339.3 247.0L341.5 246.9L343.8 246.8L346.0 247.1L348.2 247.2L350.4 246.7L352.7 246.9L354.9 246.3L357.1 246.9L359.3 246.8L361.6 247.1L363.8 246.9L366.0 246.6L369.0 245.6L370.1 243.5L371.6 241.6L374.3 242.5L377.0 243.6L379.1 244.4L381.4 244.6L383.4 245.6L385.6 246.0L387.6 247.0L389.9 246.7L392.2 246.7L394.5 247.4L396.9 246.8L399.2 247.0L401.5 247.2L403.8 247.6L406.1 247.0L408.4 247.3L410.7 247.5L413.1 247.8L415.4 247.8L417.7 247.9L420.0 247.6L422.2 247.4L424.4 247.5L426.7 247.5L428.9 247.9L431.1 248.0L433.3 247.2L435.6 247.3L437.8 247.3L440.0 247.3L442.2 247.5L444.4 247.6L446.7 247.3L448.9 247.1L451.1 247.4L453.3 247.4L455.6 247.5L457.8 247.9L460.0 247.6L462.2 247.5L464.4 247.6L466.7 247.6L468.9 247.0L471.1 247.8L473.3 247.7L475.6 247.8L477.8 247.7L480.0 247.4L482.2 247.3L484.4 247.3L486.7 247.1L488.9 247.6L491.1 247.1L493.3 247.1L495.5 247.2L497.8 247.2L500.0 247.4L502.2 247.2L504.4 247.1L506.7 247.3L508.9 247.2L511.1 247.5L513.3 247.2L515.5 248.0L517.8 247.8L520.0 247.4L522.2 247.5L524.4 247.6L526.6 247.6L528.9 247.4L531.1 248.1L533.3 248.2L535.5 247.8L537.7 247.8L540.0 247.5L542.2 247.5L544.4 247.7L546.6 247.7L548.9 248.2L551.1 247.6L553.3 247.5L555.5 248.3L557.7 248.0L560.0 247.7L562.2 248.0L564.4 248.0L566.8 251.4L568.3 249.5L570.4 248.2L572.6 248.2L574.9 248.7L577.1 248.6L579.4 248.4L581.6 248.0L583.9 248.2L586.1 248.0L588.4 248.5L590.6 248.3L592.9 248.6L595.1 248.2L597.3 248.1L599.6 248.6L601.8 248.8L604.1 248.7L606.3 248.7L608.6 248.7L610.8 248.6L613.1 248.2L615.3 248.5L617.5 248.3L619.8 248.1L622.0 248.1L624.3 248.3L626.5 248.3L628.8 248.7L631.0 249.0L633.3 248.5L635.5 249.0L637.8 249.0L640.0 248.6L642.2 249.0L644.4 248.5L646.7 248.3L648.9 248.3L651.1 248.3L653.3 248.3L655.6 248.6L657.8 248.9L660.0 248.8L662.2 248.5L664.4 248.6L666.7 248.7L668.9 248.1L671.1 248.6L673.3 248.8L675.6 248.7L677.8 248.6L680.0 248.4L682.2 248.1L684.4 248.6L686.7 248.2L688.9 248.6L691.1 248.8L693.3 248.2L695.6 248.2L697.8 248.7L700.0 248.5L702.2 248.0L704.4 247.9L706.7 248.0L708.9 248.6L711.1 248.5L713.3 247.9L715.6 248.5L717.8 248.6L720.0 248.2L722.2 248.3L724.4 248.1L726.6 248.3L728.9 247.9L731.1 247.8L733.3 248.6L735.5 248.4L737.7 248.3L739.9 248.6L742.2 248.2L744.4 248.6L746.6 248.5L748.8 248.0L751.0 248.0L753.2 248.1L755.5 248.0L757.7 248.3L759.9 248.1L762.1 248.2L764.3 247.9L766.5 248.7L768.7 248.2L771.0 248.3L773.2 248.4L775.4 248.7L777.6 248.2L779.8 248.7L782.0 248.3L784.3 248.3L786.5 248.3L788.7 247.9L790.9 248.3L793.1 248.0L795.3 247.9L797.5 248.6L799.8 248.0L802.0 248.3L804.2 248.6L806.4 248.4L808.6 248.2L810.8 248.4L813.1 248.4L815.3 248.6L817.5 248.0L819.7 248.4L821.9 248.2L824.1 248.2L826.4 248.6L828.6 248.4L830.8 248.5L833.0 248.4L832.8 250.6L832.7 252.9L833.2 255.1L833.1 257.4L833.2 259.6L833.2 261.9L833.1 264.1L833.4 266.3L833.4 268.6L833.5 270.8L833.1 273.1L833.3 275.3L833.2 277.6L833.2 279.8L833.9 282.0L833.6 284.3L833.3 286.5L833.5 288.8L834.2 291.0L834.2 293.3L834.0 295.5L834.3 297.7L834.0 300.0L834.3 302.2L834.4 304.4L833.9 306.7L833.8 308.9L833.8 311.1L834.4 313.3L834.0 315.6L834.0 317.8L834.5 320.0L833.9 322.2L833.8 324.4L834.5 326.7L833.9 328.9L834.4 331.1L834.3 333.3L833.9 335.6L834.1 337.8L834.7 340.0L834.5 342.2L834.4 344.4L834.6 346.7L834.8 348.9L834.7 351.1L834.3 353.3L835.0 355.6L834.5 357.8L834.6 360.0L834.7 362.2L835.1 364.4L834.8 366.7L834.6 368.9L834.7 371.1L835.1 373.3L834.3 375.6L834.5 377.8L834.4 380.0L835.2 382.2L835.1 384.5L835.3 386.7L834.7 388.9L835.2 391.1L835.3 393.4L835.1 395.6L834.7 397.8L834.8 400.1L835.3 402.3L835.4 404.5L834.7 406.7L835.1 409.0L835.0 411.2L835.2 413.4" stroke="#343ce0" stroke-width="1.05" fill="none" stroke-linejoin="round"/>
<path d="M329.6 385.6L332.0 385.6L334.4 385.9L336.8 386.6L339.2 386.7L341.6 386.7L343.9 387.5L346.3 387.6L348.7 388.0L351.1 387.9L353.5 388.4L355.7 388.7L357.9 388.3L360.1 388.8L362.4 388.7L364.6 388.7L366.8 388.9L369.0 389.2L371.2 388.9L373.4 388.9L375.6 389.2L377.9 389.1L380.1 389.1L382.3 389.2L384.5 389.2L386.7 389.4L388.9 389.5L391.1 389.6L393.4 389.9L395.6 389.7L397.8 389.9L400.0 390.0L402.3 389.9L404.5 390.1L406.8 390.0L409.1 390.3L411.3 390.2L413.6 390.8L415.8 390.8L418.1 390.7L420.4 390.9L422.6 391.3L424.9 390.9L427.1 391.5L429.4 391.3L431.7 391.5L433.9 391.8L436.2 391.6L438.5 391.8L440.7 392.0L443.0 392.0L445.9 392.9L449.0 393.2L452.6 394.4L453.9 396.7L455.0 399.0L456.1 401.7L457.4 404.3L458.8 406.8L457.0 409.4" stroke="#343ce0" stroke-width="1.05" fill="none"/>
<path d="M260.5 417.6L455 410L526 408.2" stroke="#1c2fd6" stroke-width="2.1" fill="none"/>
<path d="M526 408.2L537 409.4L531 411.4L498.5 417.4L475 419.4L461 423" stroke="#3038e0" stroke-width="1.15" fill="none"/>
<path d="M691.6 406V398Q691.6 393.6 700.2 393.6Q708.8 393.6 708.8 398V406Z" fill="#0a6fd2"/>
<rect x="691.6" y="405.8" width="17.2" height="3.8" fill="#050505"/>
<rect x="697.4" y="393.2" width="5.6" height="1.6" fill="#d9dccf"/>
<path d="M267.4 468.8V473.2L264.6 471Z" fill="#333"/><path d="M896.6 468.8V473.2L899.4 471Z" fill="#333"/>
<path d="M907 206.4H911.4L909.2 203.6Z" fill="#333"/><path d="M907 457.8H911.4L909.2 460.6Z" fill="#333"/>
<path d="M571 469.4V473M573 469.4V473M575 469.4V473" stroke="#777" stroke-width="0.8"/>
</svg>
<div class="a grp" style="left:919.5px;top:168px;width:164px;height:80px;border-color:#e8e8e8;box-shadow:1px 1px 0 #f8f8f8"></div>
<div class="a" style="left:921px;top:162px;width:41px;height:12px;background:#f0f0f0"></div>
<div class="a fld" style="left:983.3px;top:177.9px;width:33.4px;height:14.4px;border-color:#ababab;background:#f6f6f6"></div>
<div class="a fld" style="left:983.3px;top:195.6px;width:33.4px;height:14.4px;border-color:#ababab;background:#f6f6f6"></div>
<div class="a fld" style="left:983.3px;top:212.4px;width:33.4px;height:14.4px;border-color:#ababab;background:#f6f6f6"></div>
<div class="a fld" style="left:983.3px;top:229.6px;width:33.4px;height:14.4px;border-color:#ababab;background:#f6f6f6"></div>
<div class="a grp" style="left:919.5px;top:257.5px;width:164px;height:217px;border-color:#e8e8e8;box-shadow:1px 1px 0 #f8f8f8"></div>
<div class="a" style="left:921px;top:251px;width:66px;height:12px;background:#f0f0f0"></div>
<div class="a btn" style="left:965px;top:275px;width:108px;height:14px;border-color:#b2b2b2"></div>
<svg class="a" style="left:1061px;top:279.6px" width="8" height="6"><path d="M0.5 1.2H6.5L3.5 4.6Z" fill="#222"/></svg>
<div class="a grp" style="left:927px;top:307px;width:148.5px;height:64.5px;border-color:#e6e6e6;box-shadow:1px 1px 0 #f8f8f8"></div>
<div class="a" style="left:928.5px;top:301px;width:102.5px;height:12px;background:#f0f0f0"></div>
<div class="a" style="left:928.8px;top:316px;width:144.5px;height:18px;background:#fdfdfd"></div>
<div class="a" style="left:1000.3px;top:317px;width:1px;height:16px;background:#e2e2e2"></div>
<div class="a" style="left:928.8px;top:334px;width:144.5px;height:11.5px;background:#0d9c3a"></div>
<div class="a tabsel" style="left:220.5px;top:483px;width:22px;height:15.5px;border-color:#a5a5a5"></div>
<div class="a" style="left:220.5px;top:497.5px;width:427px;height:84.8px;border:1px solid #bdbdbd;background:#f2f2f2;box-shadow:inset 0 2px 0 #fafafa"></div>
<div class="a" style="left:221.5px;top:497.5px;width:20px;height:1px;background:#fff"></div>
<div class="a grp" style="left:222.8px;top:506px;width:269px;height:72.5px;border-color:#e7e7e7;box-shadow:inset 1px 1px 0 #f7f7f7"></div>
<div class="a" style="left:226px;top:500px;width:31.5px;height:11px;background:#f2f2f2"></div>
<div class="a grp" style="left:495px;top:506px;width:151px;height:72.5px;border-color:#e7e7e7;box-shadow:inset 1px 1px 0 #f7f7f7"></div>
<div class="a" style="left:497.5px;top:500px;width:25px;height:11px;background:#f2f2f2"></div>
<div class="a" style="left:229.6px;top:561px;width:29.6px;height:14.6px;background:#f7f7f7;border:1.2px solid #444"></div>
<div class="a" style="left:266px;top:561px;width:29.6px;height:14.6px;background:#f7f7f7;border:1.2px solid #444"></div>
<div class="a" style="left:301.5px;top:561px;width:29.6px;height:14.6px;background:#f7f7f7;border:1.2px solid #444"></div>
<div class="a" style="left:338px;top:561px;width:29.6px;height:14.6px;background:#f7f7f7;border:1.2px solid #444"></div>
<div class="a" style="left:374.4px;top:561px;width:29.6px;height:14.6px;background:#f7f7f7;border:1.2px solid #444"></div>
<div class="a" style="left:410.8px;top:561px;width:29.6px;height:14.6px;background:#f7f7f7;border:1.2px solid #444"></div>
<div class="a btn" style="left:444.5px;top:559.7px;width:43.5px;height:16px;border-color:#9b9b9b;border-radius:3px"></div>
<svg class="a" style="left:220px;top:535px" width="430" height="16" viewBox="220 535 430 16"><defs>
<radialGradient id="ly" cx="0.4" cy="0.35" r="0.7"><stop offset="0" stop-color="#ffe96a"/><stop offset="0.6" stop-color="#f2c01c"/><stop offset="1" stop-color="#c49a1a"/></radialGradient>
<radialGradient id="lg" cx="0.4" cy="0.35" r="0.7"><stop offset="0" stop-color="#e6e6e6"/><stop offset="0.6" stop-color="#b5b5b5"/><stop offset="1" stop-color="#8c8c8c"/></radialGradient></defs>
<circle cx="244.2" cy="543" r="3.9" fill="url(#ly)" stroke="#b7962a" stroke-width="0.7"/>
<circle cx="280.1" cy="543" r="3.9" fill="url(#ly)" stroke="#b7962a" stroke-width="0.7"/>
<circle cx="316.6" cy="543" r="3.9" fill="url(#ly)" stroke="#b7962a" stroke-width="0.7"/>
<circle cx="353" cy="543" r="3.9" fill="url(#ly)" stroke="#b7962a" stroke-width="0.7"/>
<circle cx="388.5" cy="543" r="3.9" fill="url(#ly)" stroke="#b7962a" stroke-width="0.7"/>
<circle cx="424.5" cy="543" r="3.9" fill="url(#ly)" stroke="#b7962a" stroke-width="0.7"/>
<circle cx="514.2" cy="543" r="3.7" fill="url(#lg)" stroke="#8f8f8f" stroke-width="0.7"/>
<circle cx="550.6" cy="543" r="3.7" fill="url(#lg)" stroke="#8f8f8f" stroke-width="0.7"/>
<circle cx="586.6" cy="543" r="3.7" fill="url(#lg)" stroke="#8f8f8f" stroke-width="0.7"/>
<circle cx="623.5" cy="543" r="3.7" fill="url(#lg)" stroke="#8f8f8f" stroke-width="0.7"/>
</svg>
<div class="a" style="left:1087px;top:604px;width:11px;height:6px;background:linear-gradient(135deg,#f0f0f0 0,#8c8c8c 45%,#6a6a6a 100%)"></div><div class="a" style="left:6px;top:598px;width:1092px;height:12px;background:#f0f0f0"></div>
<svg class="a" style="left:0;top:599.6px" width="560" height="12" viewBox="0 598 560 12">
<circle cx="16" cy="604.6" r="2.4" fill="#e2a06a"/><path d="M12 612Q12 607 16 607Q20 607 20 612Z" fill="#d8432c"/>
<rect x="62.6" y="602" width="7" height="9" rx="1" fill="#3f6fc8" stroke="#1c3a88" stroke-width="0.6"/><rect x="65" y="602.6" width="1.6" height="8" fill="#a9c8f2"/>
<path d="M211.6 603.6Q216 601 220.4 606.6L218 610H214Z" fill="#2f7ad0"/><path d="M213 604L217.6 609" stroke="#9cc6f0" stroke-width="1"/>
<circle cx="319.8" cy="607" r="5" fill="#2f86c8" stroke="#1f5f96" stroke-width="0.6"/><path d="M316.4 605.4Q318.6 602.6 322 604.2Q320.4 606.6 318 607.2Z" fill="#4fb04a"/>
<path d="M358 607.4L361 610.4L366.6 603.4" stroke="#2fa02a" stroke-width="2.2" fill="none"/>
<circle cx="430" cy="607" r="4.8" fill="#2f86c8" stroke="#1f5f96" stroke-width="0.6"/><path d="M427 605.4Q429 603 432 604.4Q430.6 606.4 428.4 607Z" fill="#4fb04a"/><path d="M431.8 601.6V605.4H433.4L430.8 608L428.2 605.4H429.8V601.6Z" fill="#e4e8ee"/>
</svg>
<span class="t" style="top:5.0px;font-size:8.8px;color:#0c0c10;left:21.0px;transform:scaleX(0.964);text-shadow:0 0 4px rgba(255,255,255,.9),0 0 6px rgba(255,255,255,.7);">SOPAS Engineering Tool</span>
<span class="t" style="top:22.2px;font-size:8.4px;left:9.0px;transform:scaleX(0.997);">Project</span>
<span class="t" style="top:22.2px;font-size:8.4px;left:41.5px;transform:scaleX(1.004);">Edit</span>
<span class="t" style="top:22.2px;font-size:8.4px;left:62.0px;transform:scaleX(0.975);">LMS5xx_FieldEval_PRO (not defined)</span>
<span class="t" style="top:22.2px;font-size:8.4px;left:206.5px;transform:scaleX(1.091);">Communication</span>
<span class="t" style="top:22.2px;font-size:8.4px;left:275.5px;transform:scaleX(1.082);">View</span>
<span class="t" style="top:22.2px;font-size:8.4px;left:300.0px;transform:scaleX(1.150);">Tools</span>
<span class="t" style="top:22.2px;font-size:8.4px;left:327.0px;transform:scaleX(1.044);">Help</span>
<span class="t" style="top:41.4px;font-size:8.4px;color:#777;left:1078.5px;transform:scaleX(1.095);">2.38.1</span>
<span class="t" style="top:64.5px;font-size:8.4px;left:13.6px;transform:scaleX(0.948);">Project Tree</span>
<span class="t" style="top:80.2px;font-size:8.4px;left:24.4px;transform:scaleX(0.943);">New Project</span>
<span class="t" style="top:91.8px;font-size:8.4px;font-weight:bold;color:#111;left:42.0px;transform:scaleX(1.010);">LMS5xx_FieldEval_PRO (not defined)</span>
<span class="t" style="top:103.4px;font-size:8.4px;left:55.0px;transform:scaleX(0.908);">Parameter</span>
<span class="t" style="top:115.1px;font-size:8.4px;left:66.0px;transform:scaleX(0.917);">Basic settings</span>
<span class="t" style="top:126.7px;font-size:8.4px;left:66.0px;transform:scaleX(0.913);">Filter</span>
<span class="t" style="top:138.3px;font-size:8.4px;left:66.0px;transform:scaleX(0.930);">Contamination measurement</span>
<span class="t" style="top:149.9px;font-size:8.4px;left:66.0px;transform:scaleX(0.881);">Field</span>
<span class="t" style="top:161.5px;font-size:8.4px;left:66.0px;transform:scaleX(0.913);">Evaluation case</span>
<span class="t" style="top:173.2px;font-size:8.4px;left:66.0px;transform:scaleX(0.925);">Data processing</span>
<span class="t" style="top:184.8px;font-size:8.4px;left:66.0px;transform:scaleX(0.931);">System</span>
<span class="t" style="top:196.4px;font-size:8.4px;left:68.8px;transform:scaleX(0.970);">Network / interfaces / IOs</span>
<span class="t" style="top:208.0px;font-size:8.4px;left:80.0px;transform:scaleX(0.887);">Serial</span>
<span class="t" style="top:219.6px;font-size:8.4px;left:80.0px;transform:scaleX(0.972);">Ethernet</span>
<span class="t" style="top:231.3px;font-size:8.4px;left:80.0px;transform:scaleX(0.848);">CAN</span>
<span class="t" style="top:242.9px;font-size:8.4px;left:80.0px;transform:scaleX(0.926);">Digital inputs</span>
<span class="t" style="top:254.5px;font-size:8.4px;left:80.0px;transform:scaleX(0.923);">Synchronisation</span>
<span class="t" style="top:266.1px;font-size:8.4px;left:80.0px;transform:scaleX(0.950);">Digital outputs</span>
<span class="t" style="top:277.7px;font-size:8.4px;left:80.0px;transform:scaleX(0.951);">External digital outputs</span>
<span class="t" style="top:289.4px;font-size:8.4px;left:80.0px;transform:scaleX(0.931);">Display settings</span>
<span class="t" style="top:301.0px;font-size:8.4px;left:55.0px;transform:scaleX(0.945);">Monitor</span>
<span class="t" style="top:312.6px;font-size:8.4px;color:#fff;left:66.0px;transform:scaleX(0.933);">Field evaluation monitor</span>
<span class="t" style="top:324.2px;font-size:8.4px;left:66.0px;transform:scaleX(0.917);">Scan view</span>
<span class="t" style="top:335.8px;font-size:8.4px;left:66.0px;transform:scaleX(0.936);">Field Infringement Logging</span>
<span class="t" style="top:347.5px;font-size:8.4px;left:55.0px;transform:scaleX(0.916);">Service</span>
<span class="t" style="top:489.7px;font-size:8.4px;left:13.6px;transform:scaleX(0.954);">Context Help</span>
<span class="t" style="top:507.0px;font-size:8.4px;left:11.8px;transform:scaleX(0.949);">Is used for the analysis of the evaluation cases and</span>
<span class="t" style="top:516.9px;font-size:8.4px;left:11.8px;transform:scaleX(0.953);">the analysis of the behaviour of the switching</span>
<span class="t" style="top:527.0px;font-size:8.4px;left:11.8px;transform:scaleX(0.936);">outputs on the LMS.</span>
<span class="t" style="top:604.2px;font-size:8.4px;left:27.0px;transform:scaleX(0.895);">Service</span>
<span class="t" style="top:604.2px;font-size:8.4px;left:74.0px;transform:scaleX(0.919);">LMS5xx_FieldEval_PRO (not defined)</span>
<span class="t" style="top:604.2px;font-size:8.4px;left:226.0px;transform:scaleX(0.981);">169.254.227.156:2111</span>
<span class="t" style="top:604.2px;font-size:8.4px;left:328.5px;transform:scaleX(0.917);">online</span>
<span class="t" style="top:604.2px;font-size:8.4px;left:370.6px;transform:scaleX(0.916);">synchronized</span>
<span class="t" style="top:604.2px;font-size:8.4px;left:437.6px;transform:scaleX(0.918);">Download Immediately</span>
<span class="t" style="top:66.0px;font-size:8.4px;left:212.0px;transform:scaleX(0.928);">Device Catalog</span>
<span class="t" style="top:66.0px;font-size:8.4px;left:272.0px;transform:scaleX(0.932);">Network Scan Assistant</span>
<span class="t" style="top:66.0px;font-size:8.4px;color:#4a8fe0;left:362.5px;transform:scaleX(0.881);">Field</span>
<span class="t" style="top:66.0px;font-size:8.4px;color:#4a8fe0;left:386.5px;transform:scaleX(0.911);">Evaluation case</span>
<span class="t" style="top:66.0px;font-size:8.4px;color:#4a8fe0;left:448.8px;transform:scaleX(0.927);">Digital outputs</span>
<span class="t" style="top:63.8px;font-size:8.4px;color:#2f7fe0;left:507.0px;transform:scaleX(0.900);">Field evaluation monitor</span>
<span class="t" style="top:88.8px;font-size:9.4px;font-weight:bold;color:#111;left:223.9px;transform:scaleX(1.039);">Monitor</span>
<span class="t" style="top:136.7px;font-size:8.4px;left:230.0px;transform:scaleX(0.982);">Output</span>
<span class="t" style="top:137.0px;font-size:8.4px;left:519.5px;transform:scaleX(1.060);">0.0°</span>
<span class="t" style="top:165.2px;font-size:8.4px;left:237.2px;transform:scaleX(0.902);">x (m)</span>
<span class="t" style="top:186.5px;font-size:8.4px;left:225.2px;transform:scaleX(0.975);">y (m)</span>
<span class="t" style="top:183.0px;font-size:8.4px;left:283.9px;transform:scaleX(0.95);">-5</span>
<span class="t" style="top:183.0px;font-size:8.4px;left:366.5px;transform:scaleX(0.95);">-4</span>
<span class="t" style="top:183.0px;font-size:8.4px;left:449.3px;transform:scaleX(0.95);">-3</span>
<span class="t" style="top:183.0px;font-size:8.4px;left:532.0px;transform:scaleX(0.95);">-2</span>
<span class="t" style="top:183.0px;font-size:8.4px;left:613.9px;transform:scaleX(0.95);">-1</span>
<span class="t" style="top:183.0px;font-size:8.4px;left:698.3px;transform:scaleX(0.95);">0</span>
<span class="t" style="top:183.0px;font-size:8.4px;left:780.3px;transform:scaleX(0.95);">1</span>
<span class="t" style="top:183.0px;font-size:8.4px;left:862.5px;transform:scaleX(0.95);">2</span>
<span class="t" style="top:231.2px;font-size:8.4px;left:249.3px;transform:scaleX(0.95);">2</span>
<span class="t" style="top:313.1px;font-size:8.4px;left:249.3px;transform:scaleX(0.95);">1</span>
<span class="t" style="top:396.3px;font-size:8.4px;left:249.3px;transform:scaleX(0.95);">0</span>
<span class="t" style="top:161.6px;font-size:8.4px;left:922.0px;transform:scaleX(0.939);">Coordinate</span>
<span class="t" style="top:179.3px;font-size:8.4px;left:974.6px;transform:scaleX(0.95);">X</span>
<span class="t" style="top:179.3px;font-size:8.4px;left:986.0px;transform:scaleX(0.968);">-55.434</span>
<span class="t" style="top:179.3px;font-size:8.4px;left:1019.4px;transform:scaleX(0.95);">m</span>
<span class="t" style="top:197.0px;font-size:8.4px;left:974.6px;transform:scaleX(0.95);">Y</span>
<span class="t" style="top:197.0px;font-size:8.4px;left:986.0px;transform:scaleX(1.073);">35.685</span>
<span class="t" style="top:197.0px;font-size:8.4px;left:1019.4px;transform:scaleX(0.95);">m</span>
<span class="t" style="top:213.8px;font-size:8.4px;left:975.1px;transform:scaleX(0.95);">d</span>
<span class="t" style="top:213.8px;font-size:8.4px;left:986.0px;transform:scaleX(1.073);">65.927</span>
<span class="t" style="top:213.8px;font-size:8.4px;left:1019.4px;transform:scaleX(0.95);">m</span>
<span class="t" style="top:231.0px;font-size:8.4px;left:974.9px;transform:scaleX(0.95);">ß</span>
<span class="t" style="top:231.0px;font-size:8.4px;left:986.0px;transform:scaleX(0.908);">147.229</span>
<span class="t" style="top:231.0px;font-size:8.4px;left:1021.1px;transform:scaleX(0.95);">°</span>
<span class="t" style="top:251.0px;font-size:8.4px;left:922.0px;transform:scaleX(0.954);">Evaluation Output</span>
<span class="t" style="top:275.9px;font-size:8.4px;left:928.3px;transform:scaleX(0.895);">Name</span>
<span class="t" style="top:275.9px;font-size:8.4px;left:966.3px;transform:scaleX(0.95);">1</span>
<span class="t" style="top:300.8px;font-size:8.4px;left:929.7px;transform:scaleX(0.912);">Linked with Evaluation Cases</span>
<span class="t" style="top:319.4px;font-size:8.4px;left:930.4px;transform:scaleX(0.95);">No</span>
<span class="t" style="top:319.4px;font-size:8.4px;left:1003.6px;transform:scaleX(0.868);">Name</span>
<span class="t" style="top:333.8px;font-size:8.4px;color:#062a10;left:928.8px;transform:scaleX(0.95);">1</span>
<span class="t" style="top:333.8px;font-size:8.4px;color:#012008;left:1001.2px;transform:scaleX(0.919);">Testcase 1</span>
<span class="t" style="top:484.0px;font-size:8.4px;left:226.0px;transform:scaleX(0.798);">IOs</span>
<span class="t" style="top:499.5px;font-size:8.4px;left:227.3px;transform:scaleX(0.978);">Outputs</span>
<span class="t" style="top:499.5px;font-size:8.4px;left:498.3px;transform:scaleX(0.994);">Inputs</span>
<span class="t" style="top:514.0px;font-size:8.4px;left:242.0px;transform:scaleX(0.95);">1</span>
<span class="t" style="top:514.0px;font-size:8.4px;left:277.9px;transform:scaleX(0.95);">2</span>
<span class="t" style="top:514.0px;font-size:8.4px;left:314.4px;transform:scaleX(0.95);">3</span>
<span class="t" style="top:514.0px;font-size:8.4px;left:350.8px;transform:scaleX(0.95);">4</span>
<span class="t" style="top:514.0px;font-size:8.4px;left:386.3px;transform:scaleX(0.95);">5</span>
<span class="t" style="top:514.0px;font-size:8.4px;left:422.3px;transform:scaleX(0.95);">6</span>
<span class="t" style="top:514.0px;font-size:8.4px;left:512.0px;transform:scaleX(0.95);">1</span>
<span class="t" style="top:514.0px;font-size:8.4px;left:548.4px;transform:scaleX(0.95);">2</span>
<span class="t" style="top:514.0px;font-size:8.4px;left:584.4px;transform:scaleX(0.95);">3</span>
<span class="t" style="top:514.0px;font-size:8.4px;left:621.3px;transform:scaleX(0.95);">4</span>
<span class="t" style="top:562.5px;font-size:8.4px;left:240.0px;transform:scaleX(0.95);">25</span>
<span class="t" style="top:562.5px;font-size:8.4px;left:276.4px;transform:scaleX(0.95);">12</span>
<span class="t" style="top:562.5px;font-size:8.4px;left:311.9px;transform:scaleX(0.95);">12</span>
<span class="t" style="top:562.5px;font-size:8.4px;left:348.4px;transform:scaleX(0.95);">12</span>
<span class="t" style="top:562.5px;font-size:8.4px;left:384.8px;transform:scaleX(0.95);">12</span>
<span class="t" style="top:562.5px;font-size:8.4px;left:421.2px;transform:scaleX(0.95);">12</span>
<span class="t" style="top:561.5px;font-size:8.4px;left:454.5px;transform:scaleX(1.051);">Reset</span>
<div class="a" style="left:437px;top:110px;width:62px;height:62px;border-radius:50%;background:radial-gradient(circle,rgba(111,175,231,.46) 0,rgba(111,175,231,.43) 55%,rgba(115,178,232,.3) 74%,rgba(120,180,234,.12) 90%,rgba(120,180,234,0) 100%)"></div>
<div class="a" style="left:467.5px;top:157px;width:48.5px;height:13.5px;background:#ffffe4;border:1px solid #5a5a5a;border-radius:2px"></div>
<div class="t" style="left:916.5px;top:27px;height:38px;line-height:38px;font-size:39.5px;font-weight:bold;color:rgba(255,255,255,.7);letter-spacing:-0.4px;transform:scaleX(1.06)">SICK</div>
<div class="t" style="left:922px;top:71px;font-size:10.5px;font-weight:bold;color:rgba(255,255,255,.42);letter-spacing:1.35px">Sensor Intelligence.</div>
<span class="t" style="top:158.2px;font-size:8.4px;left:470.4px;transform:scaleX(1.034);">Zoom auto</span>
<svg class="a" style="left:460px;top:138px" width="30" height="36" viewBox="0 0 30 36"><path d="M6.4 4.2V26.6L11.6 21.8L15.4 30.2L19.4 28.4L15.6 20.2L22.6 19.8Z" fill="#fff" stroke="#111" stroke-width="1.5" stroke-linejoin="round"/></svg>
</div></div>
</body></html>
